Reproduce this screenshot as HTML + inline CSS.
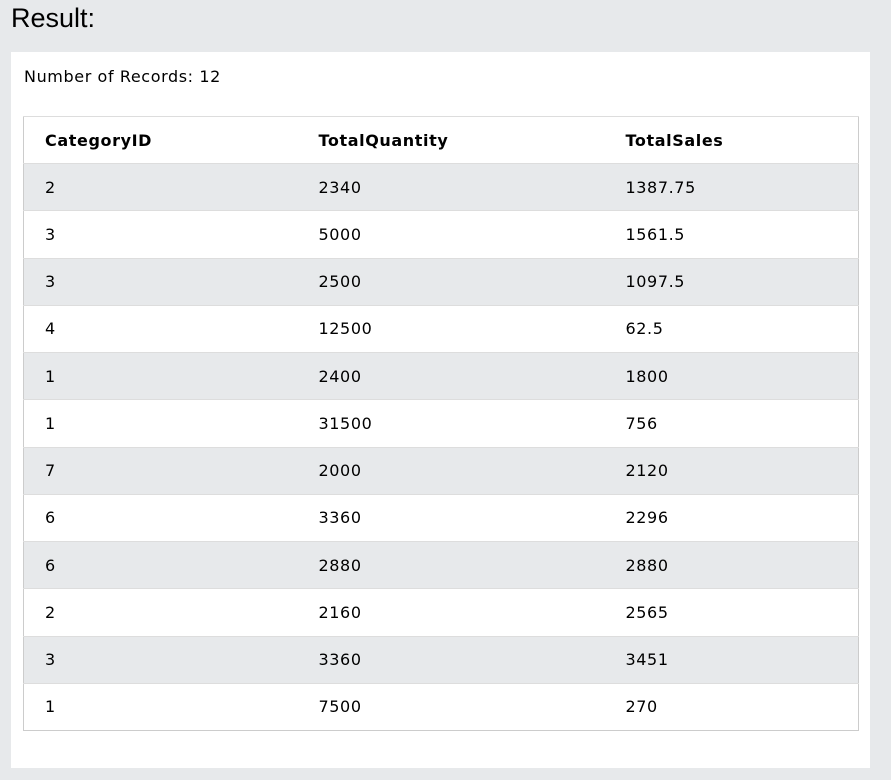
<!DOCTYPE html>
<html><head><meta charset="utf-8"><style>
body{margin:0;background:#e7e9eb;width:891px;height:780px;overflow:hidden;font-family:"DejaVu Sans","Liberation Sans",sans-serif;}
h2{position:absolute;left:11px;top:3px;margin:0;font-family:"Liberation Sans",sans-serif;font-weight:normal;font-size:27px;color:#000;}
.panel{position:absolute;left:11px;top:52px;width:859px;height:716px;background:#fff;}
.n{position:absolute;left:13px;top:15px;font-size:16px;letter-spacing:0.6px;color:#000;}
table{position:absolute;left:12px;top:64px;width:836px;border-collapse:collapse;border:1px solid #ccc;font-size:16px;letter-spacing:0.6px;table-layout:fixed;}
td,th{text-align:left;padding:0 0 0 21px;height:46.25px;border-top:1px solid #ddd;}
th{height:46px;font-weight:bold;}
tr:nth-child(even) td{background:#e7e9eb;}
</style></head><body>
<h2>Result:</h2>
<div class="panel">
<div class="n">Number of Records: 12</div>
<table>
<colgroup><col style="width:274px"><col style="width:307px"><col></colgroup>
<tr><th>CategoryID</th><th>TotalQuantity</th><th>TotalSales</th></tr>
<tr><td>2</td><td>2340</td><td>1387.75</td></tr>
<tr><td>3</td><td>5000</td><td>1561.5</td></tr>
<tr><td>3</td><td>2500</td><td>1097.5</td></tr>
<tr><td>4</td><td>12500</td><td>62.5</td></tr>
<tr><td>1</td><td>2400</td><td>1800</td></tr>
<tr><td>1</td><td>31500</td><td>756</td></tr>
<tr><td>7</td><td>2000</td><td>2120</td></tr>
<tr><td>6</td><td>3360</td><td>2296</td></tr>
<tr><td>6</td><td>2880</td><td>2880</td></tr>
<tr><td>2</td><td>2160</td><td>2565</td></tr>
<tr><td>3</td><td>3360</td><td>3451</td></tr>
<tr><td>1</td><td>7500</td><td>270</td></tr>
</table>
</div>
</body></html>
